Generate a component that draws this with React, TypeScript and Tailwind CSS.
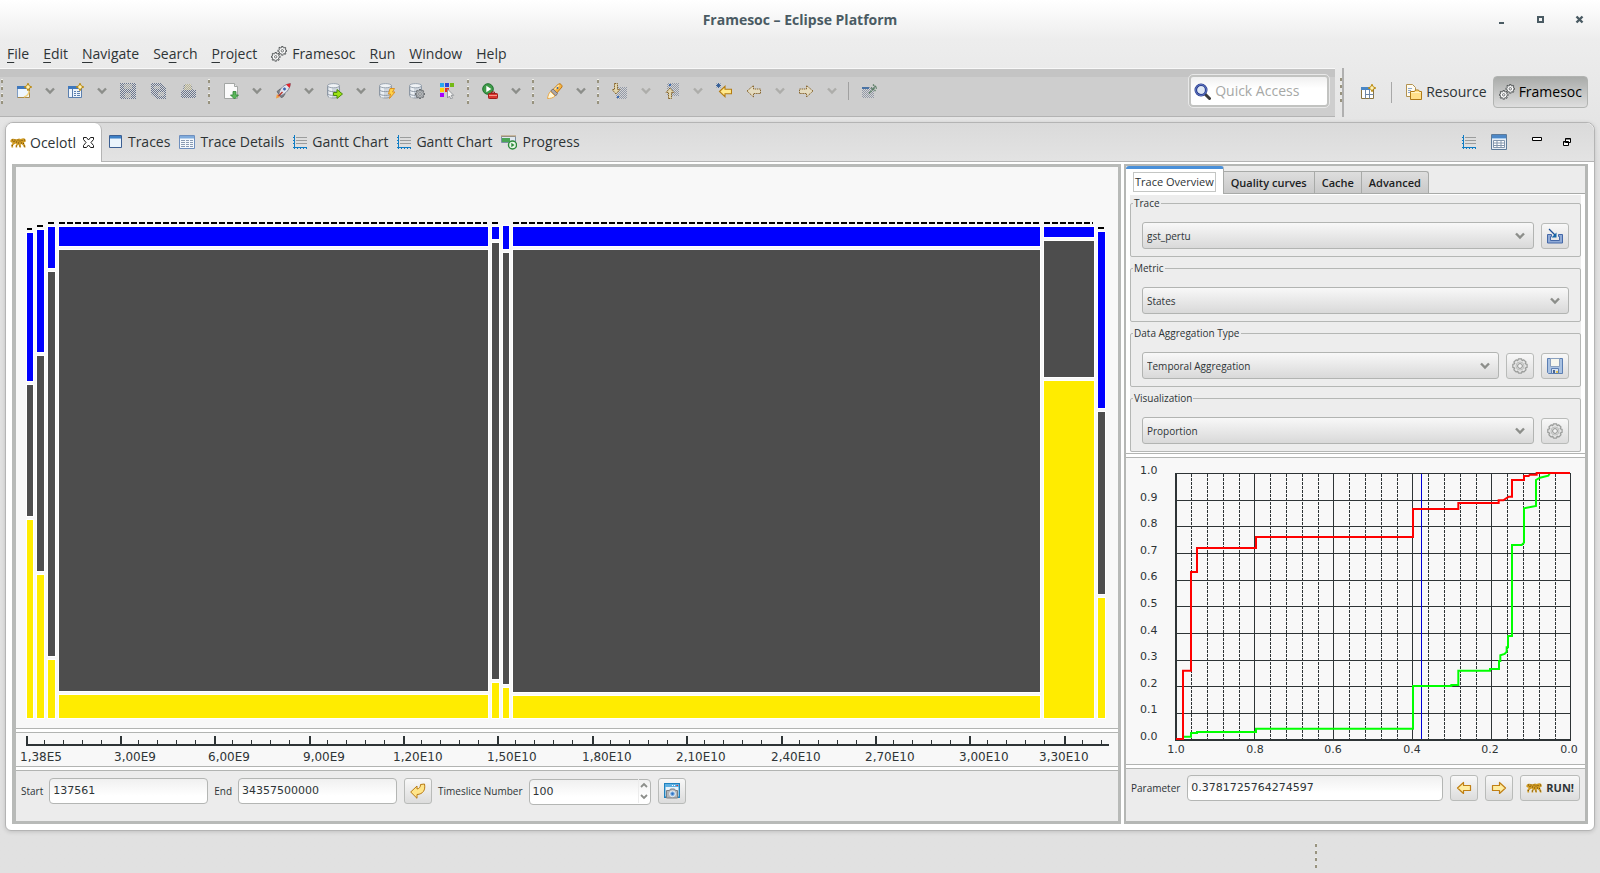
import React from "react";

type Kids = { children?: React.ReactNode };

const Svg = ({ children, w = 16, h = 16 }: Kids & { w?: number; h?: number }) => (
  <svg width={w} height={h} viewBox={`0 0 ${w} ${h}`} className="block shrink-0" aria-hidden="true">
    {children}
  </svg>
);

/* ---------- icons ---------- */

const Sparkle = ({ x = 12, y = 4 }: { x?: number; y?: number }) => (
  <path
    transform={`translate(${x} ${y})`}
    d="M0-3.8 1.2-1.2 3.8 0 1.2 1.2 0 3.8-1.2 1.2-3.8 0-1.2-1.2Z"
    fill="#fff3b8"
    stroke="#b8860b"
    strokeWidth="1"
  />
);

const NewIcon = () => (
  <Svg>
    <path d="M1.5 3.5h12v11h-12z" fill="#eef6fd" stroke="#a8894a" />
    <path d="M1 3h9v3H1z" fill="#3f78bd" />
    <path d="M1.5 6v8.5" stroke="#7f9dc4" />
    <path d="M13 8c0 4-2 5-5 6" stroke="#f1d27c" fill="none" strokeWidth="1.5" />
    <Sparkle />
  </Svg>
);

const NewWizardIcon = () => (
  <Svg>
    <path d="M.5 4.5h13v10H.5z" fill="#eef4fb" stroke="#5b7fae" />
    <path d="M0 3h10v3H0z" fill="#3f78bd" />
    <path d="M4.500 6v8" stroke="#5b7fae" />
    <path d="M6 8.500h2m1 0h3M6 10.500h2m1 0h3M6 12.500h2m1 0h3" stroke="#5b7fae" />
    <Sparkle />
  </Svg>
);

const SaveOffIcon = () => (
  <Svg>
    <path d="M0 0h16v16H1L0 15z" fill="url(#ditherBlue)" />
    <path d="M4 1h8v5H4zM5 10h6v5H5z" fill="#d6d3c8" fillOpacity=".5" />
  </Svg>
);

const SaveAllOffIcon = () => (
  <Svg>
    <path d="M1 0h10l5 5v11H7l-6-5z" fill="url(#ditherBlue)" />
    <path d="M4 3h6v3H4zM8 9h6v4H8z" fill="#dcd9cf" fillOpacity=".5" />
  </Svg>
);

const PrintOffIcon = () => (
  <Svg>
    <path d="M4 1h7l2 6h3v8H1V8l2-1z" fill="url(#ditherBlue)" />
    <path d="M5 1h6l1 6H4z" fill="#e8dcae" fillOpacity=".55" />
  </Svg>
);

const ImportDocIcon = () => (
  <Svg>
    <path d="M1.500.500h10l3 3v12h-13z" fill="#fbfbfb" stroke="#a3a6a4" />
    <path d="M11.500.500v3h3" fill="#e5e5e5" stroke="#a3a6a4" />
    <path d="M10 8.500h3v3.500h2.500L11.500 16 7.500 12H10z" fill="#5ab55a" stroke="#2d8435" strokeWidth=".8" />
  </Svg>
);

const RocketIcon = () => (
  <Svg>
    <path d="M1 15.500 2 11l3 3z" fill="#f59b3a" />
    <path d="M2 8.500 5 6h3l2 5-2 3-2 .5z" fill="#7f8288" stroke="#56595e" strokeWidth=".7" />
    <path d="M4 10.500C5 5 9 1.500 15.500.500c-.8 6-4.500 10-9.500 12z" fill="#dfe4ee" stroke="#6d7688" strokeWidth=".8" />
    <path d="M11 1.500c2-.8 3.500-1 4.500-1 0 1.500-.3 3-1 4.500z" fill="#e0242c" />
    <circle cx="9.500" cy="6" r="1.900" fill="#3c62ae" stroke="#eef1f7" strokeWidth=".8" />
    <path d="M3.500 13 7.500 9" stroke="#b5352c" strokeWidth="1.500" />
  </Svg>
);

const Db = () => (
  <g>
    <path d="M.500 2.500v10c0 1.200 2.500 2.500 6 2.500s6-1.300 6-2.500v-10z" fill="#cfd6de" stroke="#8e98a4" />
    <path d="M2 3v11.500h3V4z" fill="#f3f6f9" fillOpacity=".8" />
    <ellipse cx="6.500" cy="2.700" rx="6" ry="2.100" fill="#eff2f5" stroke="#9aa4b0" />
    <path d="M.500 6.700c1 1.500 3 1.900 6 1.900s5-.4 6-1.900M.500 10.500c1 1.500 3 1.900 6 1.900s5-.4 6-1.900" fill="none" stroke="#8e98a4" />
  </g>
);

const DbArrowIcon = () => (
  <Svg>
    <Db />
    <path d="M6.500 9.500H10V6.500l5.500 4.500-5.500 4.500v-3H6.500z" fill="#9be212" stroke="#4c8a0c" />
  </Svg>
);

const DbBoltIcon = () => (
  <Svg>
    <Db />
    <path d="M11 5.500h4.500L13.500 9H16l-5.500 6.500 1-4.500H9.500z" fill="#ffd34a" stroke="#d98a1c" strokeWidth=".9" />
  </Svg>
);

const Cog = ({ cx, cy, r, fill, stroke }: { cx: number; cy: number; r: number; fill: string; stroke: string }) => {
  const teeth = [0, 45, 90, 135, 180, 225, 270, 315];
  return (
    <g transform={`translate(${cx} ${cy})`}>
      {teeth.map((a) => (
        <path key={a} d={`M0 ${-r * 0.5}V${-r}`} stroke={stroke} strokeWidth={r * 0.42} transform={`rotate(${a})`} />
      ))}
      <circle r={r * 0.76} fill={stroke} />
      {teeth.map((a) => (
        <path key={a} d={`M0 ${-r * 0.3}V${-r * 0.8}`} stroke={fill} strokeWidth={r * 0.16} transform={`rotate(${a})`} />
      ))}
      <circle r={r * 0.6} fill={fill} />
      <circle r={r * 0.26} fill="#f4f4f4" stroke={stroke} strokeWidth=".8" />
    </g>
  );
};

const DbGearIcon = () => (
  <Svg>
    <Db />
    <Cog cx={11} cy={11} r={5} fill="#b4b7ba" stroke="#6c7074" />
  </Svg>
);

const ColorsIcon = () => (
  <Svg>
    <path d="M1 0h4v4H1z" fill="#28a8ee" />
    <path d="M6 0h4v4H6z" fill="#2b46d8" />
    <path d="M11 0h4v4h-4z" fill="#73b916" />
    <path d="M1 5h4v4H1z" fill="#ffd400" />
    <path d="M6 5h4v4H6z" fill="#e9321e" />
    <path d="M1 10h4v4H1z" fill="#a800ff" />
    <path d="M8.500 6v9l2-2 1.300 3 1.700-.8-1.300-2.900h2.500z" fill="#f3f3f3" stroke="#85898d" strokeWidth=".8" />
  </Svg>
);

const RunIcon = () => (
  <Svg>
    <circle cx="6" cy="6" r="5.300" fill="#3f9b48" stroke="#1f7330" />
    <path d="M4.300 2.800 9.300 6l-5 3.200z" fill="#fff" />
    <path d="M9.500 10v-1h3v1" stroke="#a01c1c" fill="none" />
    <rect x="6.500" y="10.500" width="9" height="5" rx=".8" fill="#d8362f" stroke="#a01c1c" />
    <path d="M7 12.500h8" stroke="#f49a8e" />
  </Svg>
);

const FlashlightIcon = () => (
  <Svg>
    <path d="M4 8.500 11.500 1c1.500-1 4 1 3.500 3L8 12z" fill="#f6b443" stroke="#bd7616" />
    <path d="m7.500 6.500 4.500-4.500" stroke="#ffe6a3" strokeWidth="1.400" />
    <path d="m3.500 8 2.500-2 4.500 4.500-2 2.500z" fill="#aea9a8" stroke="#7c7472" />
    <path d="M3.500 8.500 8 13c-2 2-4.500 2.500-7.500 2.500C1 13 1.500 10.500 3.500 8.500z" fill="#fff8da" stroke="#e9a13c" strokeWidth=".9" />
    <circle cx="10.500" cy="5" r=".9" fill="#2f5fa8" />
  </Svg>
);

const NextAnnOffIcon = () => (
  <Svg>
    <path d="M4 4h11v12H4z" fill="url(#ditherBlue)" fillOpacity=".6" />
    <path d="M2.500.500h3v6h2.500l-4 4.500-4-4.500h2.500z" fill="#e2d6ae" stroke="#84632a" strokeDasharray="1.500 .7" />
    <path d="M5 13h2v2H5z" fill="#3d6bb0" />
  </Svg>
);

const PrevAnnOffIcon = () => (
  <Svg>
    <path d="M3 0h12v13H3z" fill="url(#ditherBlue)" fillOpacity=".6" />
    <path d="M4.500 15.500h3v-6H10l-4-4.500-4 4.500h2.500z" fill="#e2d6ae" stroke="#84632a" strokeDasharray="1.500 .7" />
    <path d="M5 1h2v2H5z" fill="#3d6bb0" />
  </Svg>
);

const LastEditIcon = () => (
  <Svg>
    <path d="M3.500 8.500 9 3.300v3h6.500v4.400H9v3z" fill="#ffe98c" stroke="#b57d12" strokeWidth="1.100" />
    <path d="M2.500 0v5M0 2.500h5M.7.7l3.600 3.600M4.300.7.7 4.300" stroke="#2f5a95" strokeWidth=".9" />
  </Svg>
);

const ArrowOff = ({ flip }: { flip?: boolean }) => (
  <Svg>
    <path
      transform={flip ? "translate(16 0) scale(-1 1)" : undefined}
      d="M1 8 7.500 2.500V6h7v4.500h-7V14z"
      fill="#e5dcc0"
      stroke="#8a6a35"
      strokeDasharray="1.500 .7"
    />
  </Svg>
);

const PinOffIcon = () => (
  <Svg>
    <path d="M1 4h12v11H1z" fill="url(#ditherBlue)" fillOpacity=".6" />
    <path d="M1 4h7v2H1z" fill="#4b74a5" />
    <path d="M8 10.500 15 3M10 4.500l4.500 3.500M12 1.500l4 4" stroke="#5f8069" strokeWidth="1.500" strokeDasharray="1.700 .5" />
  </Svg>
);

const PerspectiveIcon = () => (
  <Svg>
    <path d="M1.500 3.500h12v11h-12z" fill="#fff" stroke="#8a7440" />
    <path d="M1 3h9v3H1z" fill="#4a87c6" />
    <path d="M5.500 6v8.500M9.500 6v8.500M5.500 10.500h8" stroke="#6e86a6" />
    <Sparkle />
  </Svg>
);

const ResourceIcon = () => (
  <Svg>
    <path d="M.500.500h6l3 3v9h-9z" fill="#fdfaf0" stroke="#b3924f" />
    <path d="M2 4.500h4M2 6.500h3M2 8.500h2" stroke="#8ea7cc" />
    <path d="M4.500 7.500h4l1-1.500h3l1 1.500h2v8h-11z" fill="#ffe08a" stroke="#b07b17" />
    <path d="M5 8.500h10" stroke="#fff3c4" />
  </Svg>
);

const GearsIcon = () => (
  <Svg>
    <Cog cx={4.700} cy={10.800} r={4.800} fill="#fff" stroke="#55595a" />
    <Cog cx={11.300} cy={4.800} r={4.800} fill="#fff" stroke="#55595a" />
  </Svg>
);

const GearButtonIcon = () => (
  <Svg>
    <path
      d="M6.500.800h3l.6 1.800 1.700-.8 2.200 2.200-.8 1.700 1.900.7v3l-1.900.7.8 1.700-2.200 2.200-1.700-.8-.6 1.900h-3l-.7-1.900-1.700.8-2.200-2.200.8-1.700L.800 9.400v-3l1.900-.7-.8-1.700 2.200-2.200 1.700.8z"
      fill="#e4e4e4"
      stroke="#9a9c9a"
      strokeWidth="1.200"
      strokeLinejoin="round"
    />
    <circle cx="8" cy="8" r="4" fill="none" stroke="#b4b6b4" strokeWidth=".8" />
    <circle cx="8" cy="8" r="2.400" fill="#f2f2f2" stroke="#8e908e" />
  </Svg>
);

const OcelotIcon = () => (
  <Svg>
    <path
      d="M.3 6.500C.5 4.300 1.800 3.300 3.500 3.800l2 .4c1.500.2 2.500-.1 3.500-.6l1.800.3c1-.1 1.700-.7 2.700-.6 1.400.1 2.400 1.200 2.300 2.700l-.5 1-1.300.2.3 1.500 1 1.800.3 2h-1.600l-.9-2-1.600-1.400-1 .6.6 2.800H9.400L8.700 9.700l-.6.1-1 1.200.2 1.500H5.600l.1-2.200.9-1.300-.7-.4-1.600.6-1.300 1.200.2 2.100H1.500L1.200 10l1.200-1.600-.2-1.200-.9.4z"
      fill="#cf9a22"
    />
    <path
      d="M2 5h1M4.500 5h1M3.500 6.500h1M6 7h1M7.500 5h1M8 8h1M9.500 6h1M11 8h1M11.500 5.500h1M13 8.500h1M14 5h1M1.800 10.500h1M5.900 11h1M9.500 11h1M14 11h1"
      stroke="#6d4a0d"
      strokeWidth="1"
    />
  </Svg>
);

const WindowIcon = () => (
  <Svg w={14} h={14}>
    <path d="M.500.500h12v12H.500z" fill="#eaf4fc" stroke="#3c5f92" />
    <path d="M1 1h11v2H1z" fill="#3d80c6" />
    <path d="M1 3.500h11" stroke="#8fb7e0" />
  </Svg>
);

const TableIcon = () => (
  <Svg>
    <path d="M.500 1.500h15v13H.500z" fill="#f5f9fd" stroke="#6e8fbe" />
    <path d="M1 2h14v2.500H1z" fill="#7fabdc" />
    <path d="M2 6.500h4m1 0h3m1 0h3M2 8.500h4m1 0h3m1 0h3M2 10.500h4m1 0h3m1 0h3M2 12.500h4m1 0h3m1 0h3" stroke="#8a9bb2" />
  </Svg>
);

const GanttIcon = () => (
  <Svg w={14} h={14}>
    <path d="M3 2.500h11M3 5.500h11M3 8.500h11" stroke="#9b9d9d" />
    <path d="M1.500 0v14M0 12.500h14" stroke="#0f7cc4" />
    <path d="M0 2.500h1M0 5.500h1M0 8.500h1M4.500 13v1M7.500 13v1M10.500 13v1M13.500 13v1" stroke="#0f7cc4" />
  </Svg>
);

const ProgressIcon = () => (
  <Svg>
    <path d="M.500 2.500h14v6H.500z" fill="#dfe8f0" stroke="#7c8fa3" />
    <path d="M0 2h15" stroke="#b08f5e" />
    <path d="M1 4h8v4H1z" fill="#4aa556" />
    <circle cx="11.500" cy="11" r="4" fill="#e9f6e9" stroke="#2c8a3a" strokeWidth="1.400" />
    <path d="m10.300 8.800 3.200 2.200-3.200 2.200z" fill="#2c8a3a" />
  </Svg>
);

const GridIcon = () => (
  <Svg>
    <path d="M.500.500h15v15H.500z" fill="#e8eef5" stroke="#5d7a99" />
    <path d="M1 1h14v3H1z" fill="#4d88c7" />
    <path d="M1 4.500h14" stroke="#a7cbee" />
    <path d="M2.500 6.500h11v7h-11zM2.500 9h11M2.500 11.500h11M6 6.500v7M10 6.500v7" stroke="#8396ad" fill="#fff" />
  </Svg>
);

const CloseTabIcon = () => (
  <Svg w={11} h={11}>
    <path
      d="M.500.500h3l2 2.500 2-2.500h3v2L8 5.500l2.500 3v2h-3L5.500 8l-2 2.500h-3v-2L3 5.500.500 2.500z"
      fill="#fff"
      stroke="#1a1a1a"
    />
  </Svg>
);

const SearchIcon = () => (
  <Svg w={17} h={17}>
    <path d="m11 11 4.500 4.500" stroke="#3a3a3a" strokeWidth="3" strokeLinecap="round" />
    <circle cx="7" cy="7" r="5.200" fill="#dfe8f5" stroke="#24388a" strokeWidth="2.600" />
    <circle cx="7" cy="7" r="5.400" fill="none" stroke="#6f87cf" strokeWidth=".9" />
  </Svg>
);

const LoadIcon = () => (
  <Svg>
    <path d="M.500 6.500h4v2h-1v4h9v-4h-1v-2h4v8.500H.500z" fill="#8faad6" stroke="#4468a8" />
    <path d="m2 1 6 6" stroke="#1d4f94" strokeWidth="1.200" />
    <path d="M9.500 4.500v5h-5z" fill="#1467a8" />
  </Svg>
);

const DiskIcon = () => (
  <Svg>
    <path d="M.500.500h15v15h-14l-1-1z" fill="#a9c2e2" stroke="#5c7fb3" />
    <path d="M3.500.500h9v8h-9z" fill="#f6f6ee" stroke="#8ba1bf" />
    <path d="M4.500 10.500h7v5h-7z" fill="#d7e2ee" stroke="#5c7fb3" />
    <path d="M6 12h2v3H6z" fill="#4b6692" />
    <path d="M9 13h2v2H9z" fill="#e2c35b" />
  </Svg>
);

const YellowArrow = ({ flip }: { flip?: boolean }) => (
  <Svg>
    <path
      transform={flip ? "translate(16 0) scale(-1 1)" : undefined}
      d="M1.500 8 7.500 2.500V5.500h7v5h-7v3z"
      fill="#ffeda0"
      stroke="#c07f14"
      strokeWidth="1.200"
      strokeLinejoin="round"
    />
  </Svg>
);

const ResetIcon = () => (
  <Svg>
    <path
      d="M.700 9 7 3v3c2.500-.5 3.500-2 3.500-4.500L14.500 1c1.200 6-1.500 10.200-7.500 10.500v3.800z"
      fill="#ffe58a"
      stroke="#b87a14"
      strokeLinejoin="round"
    />
  </Svg>
);

const SnapshotIcon = () => (
  <Svg>
    <path d="M.700.700h14.600v13.600H.700z" fill="#e9f3fa" stroke="#1f82bf" strokeWidth="1.400" />
    <path d="M1 1h14v3H1z" fill="#5fb0e2" />
    <path d="M8 2.500h1m1 0h1" stroke="#fff" />
    <path d="M12.500 2.500H14" stroke="#e0342c" />
    <path d="M2.500 7.500h3l1-1.500h4l1 1.500h2v7.500h-11z" fill="#b1b4b8" stroke="#7c8085" />
    <circle cx="8.500" cy="10.800" r="2.900" fill="#7fb2e6" stroke="#f1f1f1" />
    <circle cx="8.500" cy="10.800" r="1.200" fill="#2e6fc0" />
  </Svg>
);

const Chevron = ({ faded }: { faded?: boolean }) => (
  <svg width="10" height="8" viewBox="0 0 10 8" className="block shrink-0" aria-hidden="true">
    <path d="M1 1.500 5 5.500 9 1.500" fill="none" stroke={faded ? "#adadaa" : "#8c8e8a"} strokeWidth="2.400" />
  </svg>
);

/* ---------- toolbar ---------- */

const Tool = ({ label, children }: Kids & { label: string }) => (
  <button type="button" aria-label={label} className="flex h-8 w-[30px] shrink-0 items-center justify-center">
    {children}
  </button>
);

const Drop = ({ faded }: { faded?: boolean }) => (
  <button type="button" aria-label="More" className="flex h-8 w-[22px] shrink-0 items-center justify-center">
    <Chevron faded={faded} />
  </button>
);

const Grip = () => (
  <div className="flex w-[13px] shrink-0 flex-col gap-[3px] pl-[5px]">
    {[0, 1, 2, 3].map((i) => (
      <span key={i} className="h-[4px] w-[2px] border-t border-[#efefe9] bg-[#98937f]" />
    ))}
  </div>
);

const Toolbar = () => (
  <div className="flex h-12 min-w-0 flex-1 items-start border-b border-[#b3b3b3] bg-linear-to-b from-[#c4c4c4] from-[8px] to-[#cecece] to-[8px] pt-[6px]">
    <div className="-ml-1 flex items-center">
      <Grip />
      <Tool label="New"><NewIcon /></Tool>
      <Drop />
      <Tool label="New wizard"><NewWizardIcon /></Tool>
      <Drop />
      <Tool label="Save"><SaveOffIcon /></Tool>
      <Tool label="Save all"><SaveAllOffIcon /></Tool>
      <Tool label="Print"><PrintOffIcon /></Tool>
      <Grip />
      <Tool label="Import trace"><ImportDocIcon /></Tool>
      <Drop />
      <Tool label="Launch tool"><RocketIcon /></Tool>
      <Drop />
      <Tool label="Export trace"><DbArrowIcon /></Tool>
      <Drop />
      <Tool label="Index database"><DbBoltIcon /></Tool>
      <Tool label="Database settings"><DbGearIcon /></Tool>
      <Tool label="Colors"><ColorsIcon /></Tool>
      <Grip />
      <Tool label="Run external tools"><RunIcon /></Tool>
      <Drop />
      <Grip />
      <Tool label="Search"><FlashlightIcon /></Tool>
      <Drop />
      <Grip />
      <Tool label="Next annotation"><NextAnnOffIcon /></Tool>
      <Drop faded />
      <Tool label="Previous annotation"><PrevAnnOffIcon /></Tool>
      <Drop faded />
      <Tool label="Last edit location"><LastEditIcon /></Tool>
      <Tool label="Back"><ArrowOff /></Tool>
      <Drop faded />
      <Tool label="Forward"><ArrowOff flip /></Tool>
      <Drop faded />
      <div className="mx-[5px] h-[18px] w-px bg-[#a0a0a0]" />
      <Tool label="Pin editor"><PinOffIcon /></Tool>
    </div>
    <label className="mr-[6px] ml-auto flex h-8 w-[140px] items-center gap-1 rounded-[4px] border-2 border-[#c2c3c1] bg-linear-to-b from-[#f0f0f0] to-white to-40% pl-[3px] outline outline-[#e8e8e8]">
      <SearchIcon />
      <input
        aria-label="Quick Access"
        placeholder="Quick Access"
        className="w-0 min-w-0 flex-1 bg-transparent text-[14px] outline-none placeholder:text-[#a6a8a6]"
      />
    </label>
  </div>
);

const Menu = ({ text, hot, icon }: { text: string; hot?: number; icon?: React.ReactNode }) => (
  <button type="button" className="flex items-center gap-[5px]">
    {icon}
    <span>
      {hot === undefined ? (
        text
      ) : (
        <>
          {text.slice(0, hot)}
          <span className="underline underline-offset-[3px]">{text[hot]}</span>
          {text.slice(hot + 1)}
        </>
      )}
    </span>
  </button>
);

/* ---------- aggregated timeline ---------- */

type Column = { x: number; w: number; dash?: number; top: number; mid: number; low: number };

const BASE = 717;
const columns: Column[] = [
  { x: 27, w: 6, dash: 229, top: 233, mid: 385, low: 519 },
  { x: 37, w: 7, dash: 226, top: 230, mid: 356, low: 574 },
  { x: 48, w: 7, dash: 223, top: 227, mid: 272, low: 659 },
  { x: 59, w: 429, dash: 223, top: 227, mid: 250, low: 694 },
  { x: 492, w: 7, dash: 223, top: 227, mid: 243, low: 682 },
  { x: 503, w: 6, top: 226, mid: 253, low: 687 },
  { x: 513, w: 527, dash: 223, top: 227, mid: 250, low: 695 },
  { x: 1044, w: 50, dash: 223, top: 227, mid: 241, low: 381 },
  { x: 1098, w: 7, dash: 228, top: 232, mid: 412, low: 597 },
];

const Block = ({ x, y, w, h, fill }: { x: number; y: number; w: number; h: number; fill: string }) => (
  <>
    <rect x={x - 1} y={y - 1} width={w + 2} height={h + 2} fill="#fff" />
    <rect x={x} y={y} width={w} height={h} fill={fill} />
  </>
);

const Timeline = () => (
  <svg
    viewBox="16 167 1102 560"
    preserveAspectRatio="none"
    shapeRendering="crispEdges"
    className="block h-0 min-h-[240px] w-full flex-1 bg-[#f8f8f8]"
    role="img"
    aria-label="Temporal aggregation"
  >
    {columns.map((c) => (
      <g key={c.x}>
        {c.dash && (
          <path d={`M${c.x} ${c.dash}h${c.w - 1}`} stroke="#000" strokeWidth="2" strokeDasharray="6 2" />
        )}
        <Block x={c.x} y={c.top} w={c.w} h={c.mid - 4 - c.top} fill="#0000ff" />
        <Block x={c.x} y={c.mid} w={c.w} h={c.low - 4 - c.mid} fill="#4d4d4d" />
        <Block x={c.x} y={c.low} w={c.w} h={BASE - c.low} fill="#ffec00" />
      </g>
    ))}
  </svg>
);

const axis: [number, number, string][] = [
  [27, 20, "1,38E5"],
  [121, 114, "3,00E9"],
  [215, 208, "6,00E9"],
  [310, 303, "9,00E9"],
  [404, 393, "1,20E10"],
  [498, 487, "1,50E10"],
  [593, 582, "1,80E10"],
  [687, 676, "2,10E10"],
  [782, 771, "2,40E10"],
  [876, 865, "2,70E10"],
  [970, 959, "3,00E10"],
  [1065, 1039, "3,30E10"],
];

const TimeAxis = () => (
  <svg viewBox="16 732 1102 33" preserveAspectRatio="xMinYMin meet" className="block h-[33px] w-full bg-[#f8f8f8]">
    <path d="M26 744h1083" stroke="#2e3436" strokeWidth="2" />
    {axis.map(([x, tx, label]) => (
      <g key={label}>
        <path d={`M${x} 735v9`} stroke="#2e3436" strokeWidth="2" />
        {[18, 37, 56, 75].map((d) =>
          x + d < 1109 ? <path key={d} d={`M${x + d - 0.5} 739v5`} stroke="#2e3436" /> : null,
        )}
        <text x={tx} y="760" fontSize="12" fill="#2e3436" className="font-['DejaVu_Sans',sans-serif]">
          {label}
        </text>
      </g>
    ))}
  </svg>
);

/* ---------- quality curves ---------- */

const red =
  "M198 867H219V662H243V366H261V294H438V261H909V177H1045V159H1166V151H1180L1196 140H1206V90H1242V78H1256L1260 74H1280V69H1380";
const green =
  "M219 860H243V849H261V846H438V836H909V708H1024V705H1045V662H1140V657H1167V633H1171V616L1184 612L1190 605V592H1194V558H1206V285H1235L1242 278V175L1278 168V90L1290 83L1315 77L1320 69";

const Curves = () => (
  <svg
    viewBox="1126 458 459 306"
    className="block h-0 min-h-[306px] w-full flex-1 bg-[#f8f8f8]"
    role="img"
    aria-label="Quality curves"
  >
    <g stroke="#2e3436" shapeRendering="crispEdges">
      {[0, 1, 2, 3, 4, 5, 6, 7, 8, 9].map((i) => (
        <path key={i} d={`M1176 ${Math.round(473 + i * 26.65) + 0.5}h395`} />
      ))}
      {[0, 1, 2, 3, 4].map((i) =>
        [16, 32, 48, 64].map((d) => (
          <path key={`${i}-${d}`} d={`M${1175 + i * 79 + d + 0.5} 474v266`} strokeDasharray="3 1" />
        )),
      )}
      {[1254, 1333, 1412, 1491, 1570].map((x) => (
        <path key={x} d={`M${x + 0.5} 473v267`} />
      ))}
      <path d="M1176 473v267h395" fill="none" strokeWidth="2" />
      <path d="M1421.500 474v265" stroke="#0000d8" />
    </g>
    <g transform="translate(1110 450) scale(0.33333)" fill="none" strokeWidth="6">
      <path d={green} stroke="#00ff00" />
      <path d={red} stroke="#ff0000" />
    </g>
    <g fontSize="11" fill="#2e3436" className="font-['DejaVu_Sans',sans-serif]">
      {["1.0", "0.9", "0.8", "0.7", "0.6", "0.5", "0.4", "0.3", "0.2", "0.1", "0.0"].map((t, i) => (
        <text key={t} x="1140" y={Math.round(474 + i * 26.6)}>{t}</text>
      ))}
      {["1.0", "0.8", "0.6", "0.4", "0.2", "0.0"].map((t, i) => (
        <text key={t} x={1176 + Math.round(i * 78.6)} y="753" textAnchor="middle">{t}</text>
      ))}
    </g>
  </svg>
);

/* ---------- form pieces ---------- */

const IconButton = ({ label, children }: Kids & { label: string }) => (
  <button
    type="button"
    aria-label={label}
    className="flex h-[26px] w-7 shrink-0 items-center justify-center rounded-[3px] border border-[#b9bbb9] bg-linear-to-b from-[#f8f8f8] to-[#dcdcdc]"
  >
    {children}
  </button>
);

const Group = ({ title, id, value, children }: Kids & { title: string; id: string; value: string }) => (
  <fieldset className="mb-[3px] rounded-[2px] border border-[#b5b7b5] px-[11px] pb-[7px] last:mb-0">
    <legend className="-ml-[9px] h-4 px-px text-[10px] leading-4">
      <label htmlFor={id}>{title}</label>
    </legend>
    <div className="mt-[11px] flex items-center gap-[7px]">
      <div className="relative min-w-0 flex-1">
        <select
          id={id}
          className="block h-[27px] w-full appearance-none rounded-[3px] border border-[#b2b4b2] bg-linear-to-b from-[#f8f8f8] to-[#d9d9d9] pl-1 text-[10px]"
        >
          <option>{value}</option>
        </select>
        <span className="pointer-events-none absolute top-[10px] right-[9px]">
          <Chevron />
        </span>
      </div>
      {children}
    </div>
  </fieldset>
);

const field =
  "h-[26px] rounded-[4px] border border-[#b4b6b4] bg-linear-to-b from-[#f0f0f0] to-white to-70% pl-[3px] font-['DejaVu_Sans',sans-serif] text-[11px] outline-none";

const Splitter = () => <div className="h-[5px] shrink-0 border-y border-[#b2b4b2] bg-white" />;

const Tab = ({ icon, text }: { icon: React.ReactNode; text: string }) => (
  <button type="button" role="tab" className="flex h-full items-center gap-[5px]">
    {icon}
    <span>{text}</span>
  </button>
);

const SubTab = ({ text }: { text: string }) => (
  <button
    type="button"
    role="tab"
    className="h-[22px] border-t border-r border-[#a8aaa8] bg-linear-to-b from-[#dedede] to-[#c9c9c9] px-[7px] text-[11px] font-semibold text-[#1c1e1f] last:rounded-tr-[3px]"
  >
    {text}
  </button>
);

export default function App() {
  return (
    <div className="flex min-h-screen flex-col bg-linear-to-b from-[#ededed] from-[40px] to-[#e1e1e1] to-[160px] font-['Open_Sans',sans-serif] text-[14px] leading-5 text-[#2e3436]">
      <svg width="0" height="0" className="absolute" aria-hidden="true">
        <defs>
          <pattern id="ditherBlue" width="2" height="2" patternUnits="userSpaceOnUse">
            <path d="M0 0h1v1H0zM1 1h1v1H1z" fill="#6b758b" />
            <path d="M1 0h1v1H1zM0 1h1v1H0z" fill="#d6d8da" />
          </pattern>
        </defs>
      </svg>

      {/* title bar */}
      <header className="grid h-10 grid-cols-[1fr_auto_1fr] items-center bg-linear-to-b from-white to-[#ededed] text-[#4a5b63]">
        <span />
        <h1 className="text-[14px] font-bold">Framesoc – Eclipse Platform</h1>
        <div className="flex items-center justify-end gap-[24px] pr-[13px]">
          <button type="button" aria-label="Minimize">
            <Svg w={15} h={10}><path d="M5 7h5v2H5z" fill="currentColor" /></Svg>
          </button>
          <button type="button" aria-label="Maximize">
            <Svg w={15} h={10}><path d="M5 2h5v5H5z" fill="none" stroke="currentColor" strokeWidth="2" /></Svg>
          </button>
          <button type="button" aria-label="Close">
            <Svg w={15} h={10}><path d="m4.500 1.500 6 6m0-6-6 6" stroke="currentColor" strokeWidth="2.400" /></Svg>
          </button>
        </div>
      </header>

      {/* menu bar */}
      <nav className="flex h-[28px] items-center gap-[14px] pl-[7px]">
        <Menu text="File" hot={0} />
        <Menu text="Edit" hot={0} />
        <Menu text="Navigate" hot={0} />
        <Menu text="Search" hot={2} />
        <Menu text="Project" hot={0} />
        <Menu text="Framesoc" icon={<GearsIcon />} />
        <Menu text="Run" hot={0} />
        <Menu text="Window" hot={0} />
        <Menu text="Help" hot={0} />
      </nav>

      {/* tool bars */}
      <div className="flex h-[50px] items-start">
        <div className="flex min-w-0 flex-1 items-start border-t border-[#f8f8f8]">
          <Toolbar />
        </div>
        <div className="pt-[9px]">
          <Grip />
        </div>
        <div className="-ml-[6px] h-[49px] w-[2px] bg-[#b0b0b0]" />
        <div className="flex items-center pt-2 pr-3">
          <span className="ml-[9px]"><Tool label="Open perspective"><PerspectiveIcon /></Tool></span>
          <div className="mx-2 h-[21px] w-px bg-[#a8a8a8]" />
          <button type="button" className="flex h-8 items-center gap-1 px-[6px]">
            <ResourceIcon />
            Resource
          </button>
          <button
            type="button"
            className="flex h-8 items-center gap-1 rounded-[4px] border border-[#b2b4b2] bg-linear-to-b from-[#a9aba9] to-[#dedede] px-[5px] text-black"
          >
            <GearsIcon />
            Framesoc
          </button>
        </div>
      </div>

      {/* view stack */}
      <main className="mx-[5px] mt-1 flex flex-1 flex-col rounded-t-[8px] rounded-b-[6px] border border-[#b4b4b4] bg-white shadow-[0_1px_4px_rgba(0,0,0,0.15)]">
        <div className="flex h-[39px] rounded-t-[8px] border-b border-[#b4b4b4] bg-linear-to-b from-[#dadada] to-[#e3e3e3]">
          <div role="tablist" className="flex items-center gap-[10px]">
            <div className="-mb-px flex h-[39px] items-center gap-[7px] self-start rounded-t-[7px] border-r border-[#b4b4b4] bg-white pr-[7px] pl-[4px]">
              <button type="button" role="tab" aria-selected="true" className="flex items-center gap-1">
                <OcelotIcon />
                Ocelotl
              </button>
              <button type="button" aria-label="Close tab"><CloseTabIcon /></button>
            </div>
            <div className="-ml-[3px] flex h-full gap-[9px]">
              <Tab icon={<WindowIcon />} text="Traces" />
              <Tab icon={<TableIcon />} text="Trace Details" />
              <Tab icon={<GanttIcon />} text="Gantt Chart" />
              <Tab icon={<GanttIcon />} text="Gantt Chart" />
              <Tab icon={<ProgressIcon />} text="Progress" />
            </div>
          </div>
          <div className="ml-auto flex items-center pr-[12px]">
            <Tool label="Gantt chart view"><GanttIcon /></Tool>
            <Tool label="Table view"><GridIcon /></Tool>
            <span className="ml-2 flex">
              <Tool label="Minimize view">
                <Svg w={10} h={12}><path d="M.500 1.500h9v3h-9z" fill="#fff" stroke="#000" /></Svg>
              </Tool>
              <Tool label="Restore view">
                <Svg w={9} h={9}><path d="M2.500.500h5v4h-5zM.500 3.500h5v4h-5z" fill="#fff" stroke="#000" /><path d="M2.500 1h5M.500 4h5" stroke="#000" /></Svg>
              </Tool>
            </span>
          </div>
        </div>

        <div className="flex flex-1 gap-[3px] px-[6px] pt-[2px] pb-[6px]">
          <section className="flex min-w-0 flex-1 flex-col border-[3px] border-l-4 border-[#b8bab8]">
            <Timeline />
            <Splitter />
            <TimeAxis />
            <Splitter />
            <form className="flex h-[50px] items-start bg-[#ececec] pt-[7px] pl-[5px] text-[10px] leading-[26px]">
              <label htmlFor="start" className="mr-[6px]">Start</label>
              <input id="start" defaultValue="137561" className={`${field} w-[159px]`} />
              <label htmlFor="end" className="mr-[6px] ml-[6px]">End</label>
              <input id="end" defaultValue="34357500000" className={`${field} w-[159px]`} />
              <span className="mr-[6px] ml-[7px]"><IconButton label="Reset range"><ResetIcon /></IconButton></span>
              <label htmlFor="slices" className="mr-[6px]">Timeslice Number</label>
              <span className="relative mr-[7px] block">
                <input id="slices" defaultValue="100" className={`${field} w-[122px]`} />
                <span className="absolute top-px right-px flex h-6 w-3 flex-col items-center justify-between border-l border-[#ececec] py-[3px]">
                  <span className="rotate-180"><Svg w={8} h={6}><path d="m1 1 3 3 3-3" fill="none" stroke="#8c8e8a" strokeWidth="1.800" /></Svg></span>
                  <Svg w={8} h={6}><path d="m1 1 3 3 3-3" fill="none" stroke="#8c8e8a" strokeWidth="1.800" /></Svg>
                </span>
              </span>
              <IconButton label="Snapshot"><SnapshotIcon /></IconButton>
            </form>
          </section>

          <section className="flex w-[464px] shrink-0 flex-col border-2 border-[#b5b7b5] border-r-[3px] border-b-[3px]">
            <div className="flex h-[28px] items-end border-b border-[#a8aaa8] bg-[#ececec]" role="tablist">
              <button
                type="button"
                role="tab"
                aria-selected="true"
                className="-mb-px h-[28px] self-start rounded-t-[3px] border-t-[3px] border-r border-t-[#4a90d9] border-r-[#a8aaa8] bg-white px-[7px] text-[11px]"
              >
                <span className="block border border-[#c4c6c4] px-px leading-[18px]">Trace Overview</span>
              </button>
              <SubTab text="Quality curves" />
              <SubTab text="Cache" />
              <SubTab text="Advanced" />
            </div>
            <div className="bg-white px-1 pt-px pb-px">
              <div className="bg-[#ededed]">
                <Group title="Trace" id="trace" value="gst_pertu">
                  <IconButton label="Load trace"><LoadIcon /></IconButton>
                </Group>
                <Group title="Metric" id="metric" value="States" />
                <Group title="Data Aggregation Type" id="aggregation" value="Temporal Aggregation">
                  <IconButton label="Aggregation settings"><GearButtonIcon /></IconButton>
                  <IconButton label="Save aggregation"><DiskIcon /></IconButton>
                </Group>
                <Group title="Visualization" id="visualization" value="Proportion">
                  <IconButton label="Visualization settings"><GearButtonIcon /></IconButton>
                </Group>
              </div>
            </div>
            <Splitter />
            <Curves />
            <Splitter />
            <form className="flex h-[52px] items-start gap-[7px] bg-[#ececec] px-[5px] pt-[6px] text-[10px] leading-[26px]">
              <label htmlFor="parameter">Parameter</label>
              <input id="parameter" defaultValue="0.3781725764274597" className={`${field} w-0 min-w-0 flex-1`} />
              <IconButton label="Previous parameter"><YellowArrow /></IconButton>
              <IconButton label="Next parameter"><YellowArrow flip /></IconButton>
              <button
                type="button"
                className="flex h-[26px] items-center gap-1 rounded-[3px] border border-[#b9bbb9] bg-linear-to-b from-[#f8f8f8] to-[#dcdcdc] px-[5px] text-[11px] font-bold"
              >
                <OcelotIcon />
                RUN!
              </button>
            </form>
          </section>
        </div>
      </main>

      {/* status line */}
      <footer className="flex h-[42px] items-center justify-end pt-[6px] pr-[277px]">
        <Grip />
      </footer>
    </div>
  );
}
